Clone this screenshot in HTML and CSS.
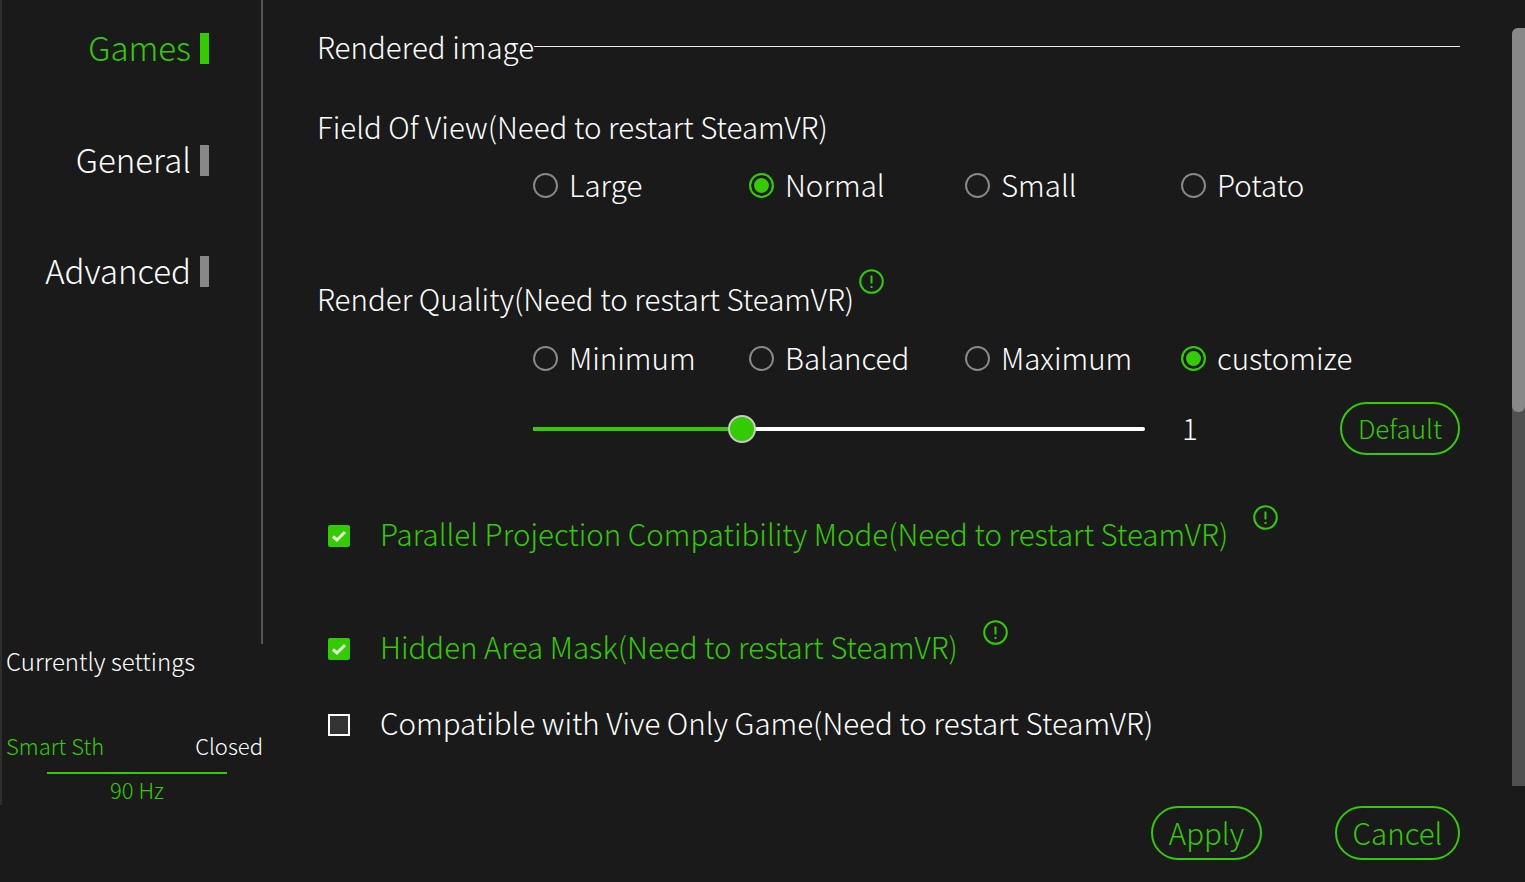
FILE: index.html
```html
<!DOCTYPE html>
<html lang="en">
<head>
    <meta charset="UTF-8">
    <title>Settings</title>
    <link rel="stylesheet" href="styles.css">
</head>
<body>
    <div class="app">
        <aside class="sidebar">
            <nav class="nav">
                <div class="nav-item active"><span>Games</span><i class="nav-bar"></i></div>
                <div class="nav-item"><span>General</span><i class="nav-bar"></i></div>
                <div class="nav-item"><span>Advanced</span><i class="nav-bar"></i></div>
            </nav>
            <div class="status">
                <div class="status-title">Currently settings</div>
                <div class="status-row"><span class="green">Smart Sth</span><span>Closed</span></div>
                <div class="status-rate green">90 Hz</div>
            </div>
        </aside>

        <main class="content">
            <div class="section-title"><span>Rendered image</span><i class="section-line"></i></div>

            <div class="label fov-label">Field Of View(Need to restart SteamVR)</div>
            <div class="radios radios-fov">
                <div class="radio"><i class="dot"></i>Large</div>
                <div class="radio"><i class="dot on"></i>Normal</div>
                <div class="radio"><i class="dot"></i>Small</div>
                <div class="radio"><i class="dot"></i>Potato</div>
            </div>

            <div class="label quality-label">
                Render Quality(Need to restart SteamVR)
                <svg class="info" viewBox="0 0 25 25"><circle cx="12.5" cy="12.5" r="11.3"/><path d="M12.5 6.5v8M12.5 17v2"/></svg>
            </div>
            <div class="radios">
                <div class="radio"><i class="dot"></i>Minimum</div>
                <div class="radio"><i class="dot"></i>Balanced</div>
                <div class="radio"><i class="dot"></i>Maximum</div>
                <div class="radio"><i class="dot on"></i>customize</div>
            </div>

            <div class="slider-row">
                <div class="slider">
                    <div class="slider-fill"></div>
                    <i class="slider-thumb"></i>
                </div>
                <span class="slider-value">1</span>
                <button class="btn btn-default">Default</button>
            </div>

            <div class="check green parallel">
                <svg class="box" viewBox="0 0 22 22"><rect width="22" height="22" rx="2" fill="#33cc00"/><path d="M5 11.5l4 3.5 8-8" class="tick"/></svg>
                Parallel Projection Compatibility Mode(Need to restart SteamVR)
                <svg class="info" viewBox="0 0 25 25"><circle cx="12.5" cy="12.5" r="11.3"/><path d="M12.5 6.5v8M12.5 17v2"/></svg>
            </div>
            <div class="check green hidden-mask">
                <svg class="box" viewBox="0 0 22 22"><rect width="22" height="22" rx="2" fill="#33cc00"/><path d="M5 11.5l4 3.5 8-8" class="tick"/></svg>
                Hidden Area Mask(Need to restart SteamVR)
                <svg class="info" viewBox="0 0 25 25"><circle cx="12.5" cy="12.5" r="11.3"/><path d="M12.5 6.5v8M12.5 17v2"/></svg>
            </div>
            <div class="check vive">
                <svg class="box" viewBox="0 0 22 22"><rect x="1" y="1" width="20" height="20" fill="#333" stroke="#fff" stroke-width="2"/></svg>
                Compatible with Vive Only Game(Need to restart SteamVR)
            </div>

            <div class="actions">
                <button class="btn btn-apply">Apply</button>
                <button class="btn btn-cancel">Cancel</button>
            </div>
        </main>

        <div class="scrollbar"><div class="scrollbar-thumb"></div></div>
    </div>
</body>
</html>
```

FILE: styles.css
```css
* {
    box-sizing: border-box;
}

body {
    margin: 0;
    background-color: #1a1a1a;
    color: #ffffff;
    font-family: 'Noto Sans CJK SC', 'Noto Sans', sans-serif;
    font-weight: 300;
    overflow: hidden;
}

.app {
    display: flex;
    height: 882px;
}

.green {
    color: #33cc00;
}

/* Sidebar */
.sidebar {
    width: 263px;
    height: 805px;
    flex-shrink: 0;
    border-left: 2px solid #2e2e2e;
}

.nav {
    height: 644px;
    padding-top: 27px;
    border-right: 2px solid #555555;
}

.nav-item {
    height: 43px;
    margin-bottom: 68.5px;
    padding-right: 52px;
    display: flex;
    justify-content: flex-end;
    align-items: center;
    gap: 9px;
    font-size: 33px;
    line-height: 43px;
}

.nav-item span {
    margin-bottom: 2px;
}

.nav-bar {
    width: 9px;
    height: 31px;
    background-color: #888888;
}

.nav-item.active {
    color: #33cc00;
}

.nav-item.active .nav-bar {
    background-color: #33cc00;
}

.status {
    padding-left: 4px;
    font-size: 24px;
}

.status-title {
    height: 38px;
    line-height: 34px;
}

.status-row {
    margin-top: 46px;
    display: flex;
    justify-content: space-between;
    height: 36px;
    line-height: 35px;
    font-size: 22px;
}

.status-rate {
    width: 180px;
    margin-left: 41px;
    margin-top: 8px;
    border-top: 2px solid #33cc00;
    text-align: center;
    font-size: 22px;
    line-height: 30px;
}

/* Main panel */
.content {
    flex: 1;
    padding: 24px 52px 0 54px;
    font-size: 29.5px;
    line-height: 44px;
}

.section-title {
    display: flex;
    align-items: center;
    height: 44px;
}

.section-line {
    flex: 1;
    height: 1px;
    margin-top: 1px;
    background-color: #e8e8e8;
}

.label {
    height: 44px;
    display: flex;
    align-items: center;
}

.fov-label {
    margin-top: 36px;
}

.quality-label {
    margin-top: 70px;
}

.radios {
    margin-top: 15px;
    margin-left: 216px;
    display: grid;
    grid-template-columns: repeat(4, 216px);
}

.radios-fov {
    margin-top: 14px;
}

.radio {
    height: 44px;
    display: flex;
    align-items: center;
    gap: 11px;
}

.dot {
    width: 25px;
    height: 25px;
    margin-top: 2px;
    border: 2px solid #888888;
    border-radius: 50%;
}

.dot.on {
    border-color: #33cc00;
    background-color: #33cc00;
    box-shadow: inset 0 0 0 3px #1a1a1a;
}

.slider-row {
    margin-top: 23px;
    margin-left: 216px;
    height: 53px;
    display: flex;
    align-items: center;
}

.slider {
    width: 612px;
    height: 4px;
    background-color: #ffffff;
    border-radius: 2px;
    position: relative;
}

.slider-fill {
    width: 208px;
    height: 100%;
    background-color: #33cc00;
    border-radius: 2px;
}

.slider-thumb {
    position: absolute;
    left: 195px;
    top: -12px;
    width: 28px;
    height: 28px;
    border: 2px solid #c8c8c8;
    border-radius: 50%;
    background-color: #33cc00;
}

.slider-value {
    margin-left: 37px;
    margin-bottom: 3px;
}

.btn {
    font-family: inherit;
    font-weight: 300;
    background: none;
    border: 2px solid #33cc00;
    color: #33cc00;
    padding: 0 0 3px;
}

.btn-default {
    margin-left: auto;
    width: 120px;
    height: 53px;
    border-radius: 27px;
    font-size: 26px;
}

.check {
    height: 44px;
    padding-left: 11px;
    display: flex;
    align-items: center;
}

.box {
    width: 22px;
    height: 22px;
    margin-right: 30px;
    margin-top: 5px;
}

.tick {
    fill: none;
    stroke: #e8f8e0;
    stroke-width: 3;
}

.info {
    width: 25px;
    height: 25px;
    margin-left: 5px;
    margin-top: -33px;
    fill: none;
    stroke: #33cc00;
    stroke-width: 2;
}

.parallel {
    margin-top: 56px;
}

.parallel .info {
    margin-left: 25px;
    margin-top: -31px;
}

.hidden-mask {
    margin-top: 69px;
}

.hidden-mask .box {
    margin-top: 6px;
}

.hidden-mask .info {
    margin-left: 25px;
    margin-top: -27px;
}

.vive {
    margin-top: 32px;
}

.vive .box {
    margin-top: 5px;
}

.actions {
    margin-top: 62px;
    display: flex;
    justify-content: flex-end;
    gap: 73px;
}

.actions .btn {
    height: 54px;
    border-radius: 27px;
    font-size: 29.5px;
}

.btn-apply {
    width: 111px;
}

.btn-cancel {
    width: 125px;
}

/* Scrollbar */
.scrollbar {
    width: 13px;
    height: 758px;
    margin-top: 28px;
    flex-shrink: 0;
    background-color: #505050;
    border-radius: 6px 0 0 0;
}

.scrollbar-thumb {
    height: 384px;
    background-color: #888888;
    border-radius: 6px 0 6px 6px;
}
```
